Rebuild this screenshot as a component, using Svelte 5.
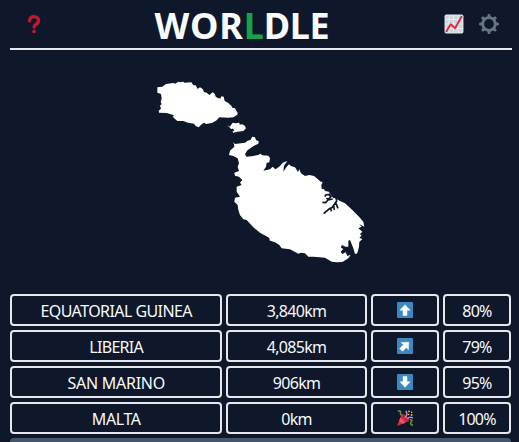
<script>
  const guesses = [
    { name: 'EQUATORIAL GUINEA', tracking: -0.57, distance: '3,840km', turn: 0, percent: '80%' },
    { name: 'LIBERIA', tracking: -0.7, distance: '4,085km', turn: 45, percent: '79%' },
    { name: 'SAN MARINO', tracking: -0.25, distance: '906km', turn: 180, percent: '95%' },
    { name: 'MALTA', tracking: -0.4, distance: '0km', turn: null, percent: '100%' }
  ];
  const teeth = [0, 45, 90, 135, 180, 225, 270, 315];
</script>

<main>
  <header>
    <button aria-label="Help">
      <svg viewBox="0 0 36 36" width="20" height="20">
        <path d="M10 12.2C10.4 7.5 13.7 4.7 18.2 4.7c4.600 0 8 2.900 8 7.100 0 3.700-2 5.300-4.300 6.700-2.300 1.400-3.600 2.200-3.600 4.800" fill="none" stroke="#be1931" stroke-width="6.200" stroke-linecap="round"/>
        <circle cx="18.200" cy="31.300" r="3.400" fill="#be1931"/>
      </svg>
    </button>
    <h1><span class="start">WOR</span><span class="accent">L</span>DLE</h1>
    <div class="tools">
      <button aria-label="Stats">
        <svg viewBox="0 0 36 36" width="20" height="20">
          <rect x="1" y="1" width="34" height="34" rx="3" fill="#e1e8ed"/>
          <path d="M3 3h30v30H3z" fill="#ccd6dd"/>
          <path d="M9 2v32M17 2v32M25 2v32M2 10h32M2 18h32M2 26h32" stroke="#eef2f5" stroke-width="1.400"/>
          <path d="M4.500 31L12 18.500l8 7L31.500 5" fill="none" stroke="#dd2e44" stroke-width="3.500" stroke-linecap="round" stroke-linejoin="round"/>
        </svg>
      </button>
      <button aria-label="Settings">
        <svg viewBox="0 0 36 36" width="20" height="20">
          <circle cx="18" cy="18" r="11.300" fill="none" stroke="#66757f" stroke-width="5"/>
          {#each teeth as angle}
            <path d="M15 6l.6-5q.2-1 2.400-1t2.400 1l.6 5z" fill="#66757f" transform="rotate({angle} 18 18)"/>
          {/each}
        </svg>
      </button>
    </div>
  </header>

  <svg class="country" viewBox="10 50 502 244" width="502" height="244" role="img" aria-label="Country outline">
    <g fill="#fff" transform="translate(150 75) scale(.33333)">
      <path d="M22 37L37 35L48 27L70 24L76 26L85 20L91 22L100 20L103 23L124 22L130 31L137 31L143 42L150 37L158 42L162 51L170 53L178 60L186 53L189 52L195 58L197 65L205 70L212 70L214 64L221 65L224 78L234 83L244 92L247 98L255 100L263 114L262 119L250 127L235 128L208 127L200 136L186 144L168 147L163 143L155 148L146 157L137 153L132 146L114 143L100 138L82 138L76 133L68 125L72 121L50 114L27 113L26 107L33 101L30 92L35 87L32 82L35 70L33 57L22 53Z"/>
      <path d="M232 151L240 155L243 150L248 143L256 145L268 143L269 149L277 148L284 152L288 160L280 168L262 170L250 173L247 170L253 167L249 161L243 162L240 158Z"/>
    </g>
    <g transform="translate(225 130) scale(.33333)">
      <path fill="#fff" d="M24 37L30 42L60 38L68 32L76 30L82 20L90 22L93 30L101 34L100 41L86 48L68 60L60 72L64 80L80 79L100 75L106 71L112 76L130 77L135 84L133 97L125 98L123 110L115 122L135 118L143 110L148 115L152 118L165 108L173 98L187 93L177 107L175 125L184 112L192 103L198 108L210 112L219 126L223 118L228 130L240 138L253 135L267 138L278 147L285 154L293 157L289 165L290 177L297 177L300 183L312 185L315 193L323 201L331 205L345 213L360 220L382 240L402 260L415 275L418 290L403 283L410 290L400 295L412 305L405 312L410 317L403 323L412 328L403 335L402 350L397 370L390 372L385 355L375 330L370 332L370 350L362 350L350 345L348 353L355 357L347 365L352 372L362 367L367 378L377 374L370 385L352 396L335 397L320 395L300 383L265 380L250 380L240 370L228 368L220 371L195 358L170 355L163 345L150 337L135 332L132 323L105 308L85 292L65 270L55 268L45 255L40 240L38 225L28 215L30 203L45 200L35 185L35 170L50 165L45 158L52 150L42 140L30 137L28 128L42 123L38 110L42 100L38 85L25 78L12 75L15 62L28 50L27 43Z"/>
      <path fill="none" stroke="#0f172a" stroke-width="5" d="M315 193L302 195L300 200M312 193L318 200L310 208L304 205M292 217L302 218L309 210L323 207M333 203L335 213L322 232L312 237L296 251M326 227L328 240M317 234L319 244M332 218L339 235M330 195L325 204"/>
    </g>
  </svg>

  <section>
    {#each guesses as guess}
      <div class="cell name" style="letter-spacing: {guess.tracking}px">{guess.name}</div>
      <div class="cell distance">{guess.distance}</div>
      <div class="cell">
        {#if guess.turn !== null}
          <svg viewBox="0 0 36 36" width="16" height="16">
            <rect width="36" height="36" rx="2.500" fill="#3b88c3"/>
            <path d="M18 6L29.500 18.500H22.500V30.500H13.500V18.500H6.500Z" fill="#fff" stroke="#fff" stroke-linejoin="round" transform="rotate({guess.turn} 18 18)"/>
          </svg>
        {:else}
          <svg viewBox="0 0 36 36" width="16" height="16">
            <path d="M11 9L27 25L3 35Q0 36 1 33Z" fill="#dd2e44"/>
            <path d="M8 17L18 29L13 31L5 24Z" fill="#ea596e"/>
            <ellipse cx="19" cy="17" rx="4" ry="11" transform="rotate(-45 19 17)" fill="#c01c38"/>
            <path d="M18 18Q25 11 20 2M23 20Q28 14 36 18" fill="none" stroke="#aa8dd8" stroke-width="3.500"/>
            <path d="M2 3Q9 0 8 6T12 12M29 22Q36 21 32 27T36 34" fill="none" stroke="#5c913b" stroke-width="3.500"/>
            <g fill="#ffcc4d"><circle cx="27" cy="3" r="2"/><circle cx="33" cy="5" r="1.800"/><circle cx="26" cy="10" r="1.800"/><circle cx="33" cy="11" r="2"/></g>
          </svg>
        {/if}
      </div>
      <div class="cell percent">{guess.percent}</div>
    {/each}
    <div class="next"></div>
  </section>
</main>

<style>
  :global(body) { background: #0f172a; overflow: hidden; }
  main {
    box-sizing: border-box;
    width: 519px;
    height: 442px;
    padding: 0 7px 0 10px;
    overflow: hidden;
    background: #0f172a;
    color: #f8fafc;
    font-family: "Segoe UI", "Noto Sans", "Open Sans", sans-serif;
  }
  header {
    display: grid;
    grid-template-columns: 68px 1fr 68px;
    align-items: center;
    height: 48px;
    border-bottom: 2px solid #e5e7eb;
  }
  button {
    display: flex;
    padding: 0;
    border: 0;
    background: none;
  }
  header > button { margin-left: 14px; }
  h1 {
    margin: 0 0 0 -38px;
    padding-top: 4px;
    text-align: center;
    font-size: 36px;
    line-height: 40px;
    font-weight: 700;
    letter-spacing: -0.3px;
    white-space: nowrap;
  }
  .start { letter-spacing: 0.9px; }
  .accent { color: #16a34a; }
  .tools { display: flex; gap: 14.500px; }
  svg { display: block; flex: none; }
  section {
    display: grid;
    grid-template-columns: repeat(7, minmax(0, 1fr));
    gap: 4px;
    width: 501px;
    grid-auto-rows: 32px;
  }
  .cell {
    display: flex;
    box-sizing: border-box;
    align-items: center;
    justify-content: center;
    border: 2px solid #e5e7eb;
    border-radius: 4px;
    font-size: 16px;
    line-height: 24px;
    white-space: nowrap;
  }
  .name { grid-column: span 3; }
  .distance { grid-column: span 2; letter-spacing: -0.7px; }
  .percent { letter-spacing: -0.8px; }
  .name, .distance, .percent { padding-top: 2px; }
  .next {
    grid-column: span 7;
    border-radius: 4px;
    background: #475569;
  }
</style>
